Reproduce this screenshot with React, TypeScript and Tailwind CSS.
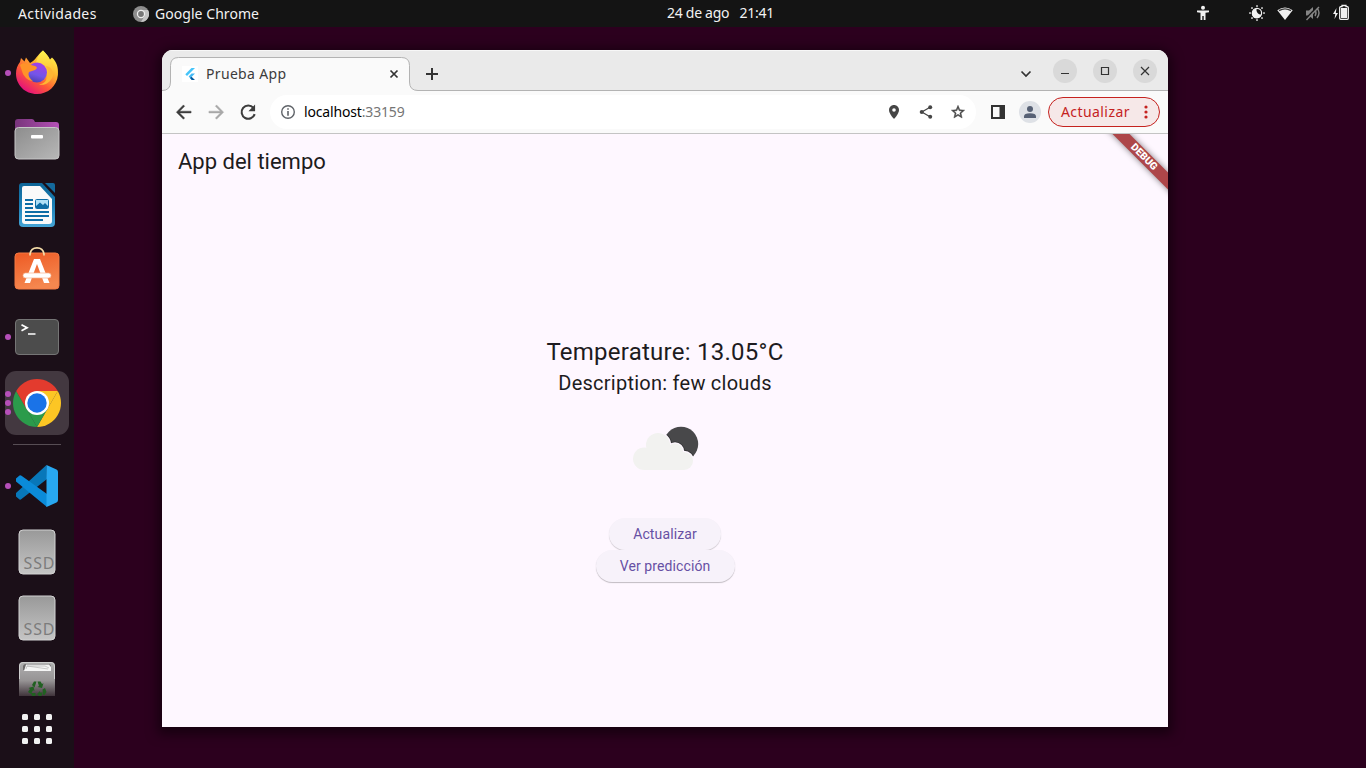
import type { ReactNode } from "react";

const UI = "font-['Noto_Sans','Open_Sans',sans-serif]";
const PAGE = "font-[Roboto,'Liberation_Sans',sans-serif]";

function Cell({ dots = 0, active = false, children }: { dots?: number; active?: boolean; children: ReactNode }) {
  const ys = dots === 3 ? [24, 33, 42] : dots === 1 ? [33] : [];
  return (
    <svg className="block h-[66px] w-[74px] shrink-0" viewBox="0 0 74 66">
      {active && <rect x="5" y="1" width="64" height="64" rx="11" fill="#433840" />}
      {children}
      {ys.map((y) => (
        <circle key={y} cx="8" cy={y} r="3" fill="#b64fb9" />
      ))}
    </svg>
  );
}

function Firefox() {
  return (
    <Cell dots={1}>
      <defs>
        <linearGradient id="ff1" x1="0.85" y1="0.1" x2="0.25" y2="0.95">
          <stop offset="0" stopColor="#fff04a" />
          <stop offset="0.35" stopColor="#ffb02e" />
          <stop offset="0.65" stopColor="#ff5a36" />
          <stop offset="1" stopColor="#e5127b" />
        </linearGradient>
        <linearGradient id="ff2" x1="0.6" y1="0" x2="0.3" y2="1">
          <stop offset="0" stopColor="#a43ee8" />
          <stop offset="0.6" stopColor="#7355e8" />
          <stop offset="1" stopColor="#4b3fb0" />
        </linearGradient>
        <linearGradient id="ff3" x1="0" y1="0" x2="0" y2="1">
          <stop offset="0" stopColor="#fff44f" />
          <stop offset="1" stopColor="#ffa52c" />
        </linearGradient>
      </defs>
      <path d="M43 10.500C45 13 48 15 49.500 20L52 17.500C57 22 58.500 28 57.900 35C57 46 48 54 37 54C25 54 16 45 16 33.500C16 29 17.500 25 20 22L21 18L24.500 21.500L26 17.500L30 23C36 20 37 15 43 10.500Z" fill="url(#ff1)" />
      <path d="M43 10.500C46 14 50 17 51 23C55 30 52 40 45 43C49 35 45 27 36 23C37 18 39 14 43 10.500Z" fill="url(#ff3)" />
      <circle cx="37" cy="32.500" r="10" fill="url(#ff2)" />
      <path d="M20 25C24 21 29 25 35 26C38 27 37 29 35 30L29 32C27.500 35 30 39 33 41C28 41 23 36 22 31Z" fill="#ff9328" />
      <path d="M45 26C51 31 49 43 39 44.500C45 46 51 42 53 36C54 30 50 26 45 26Z" fill="#ffb733" />
    </Cell>
  );
}

function Files() {
  return (
    <Cell>
      <defs>
        <linearGradient id="fl" x1="0" y1="0" x2="1" y2="1">
          <stop offset="0" stopColor="#8d8d8d" />
          <stop offset="1" stopColor="#b7b7b7" />
        </linearGradient>
        <linearGradient id="fp" x1="0" y1="0" x2="1" y2="0">
          <stop offset="0" stopColor="#78347b" />
          <stop offset="1" stopColor="#b451b6" />
        </linearGradient>
      </defs>
      <path d="M15 16Q15 13 18 13H32Q34 13 35 16H56Q59 16 59 19V30H15Z" fill="url(#fp)" />
      <rect x="15" y="21.500" width="44" height="31.500" rx="3.500" fill="url(#fl)" stroke="#c7c7c7" strokeWidth="1" />
      <rect x="31" y="29" width="12" height="3.500" rx="1" fill="#fff" />
    </Cell>
  );
}

function Writer() {
  return (
    <Cell>
      <defs>
        <linearGradient id="wr" x1="0" y1="0" x2="0" y2="1">
          <stop offset="0" stopColor="#0d6597" />
          <stop offset="0.5" stopColor="#1b7fb5" />
          <stop offset="1" stopColor="#45a5d6" />
        </linearGradient>
      </defs>
      <path d="M22 11H42L55 25V51Q55 55 51 55H23Q19 55 19 51V14Q19 11 22 11Z" fill="url(#wr)" />
      <path d="M24 14H40L52 27V49Q52 52 49 52H25Q22 52 22 49V16Q22 14 24 14Z" fill="#fafafa" />
      <path d="M45 11H53Q55 11 55 13V21Z" fill="#14699c" />
      <path d="M25 28H33M25 32H33M25 36H33M25 40H49M25 44H49M25 48H43" stroke="#0d6da6" strokeWidth="2" />
      <rect x="35.500" y="27.500" width="13" height="9" rx="1" fill="#aee0f7" stroke="#0d6da6" />
      <path d="M36 36V34L40 30.500L43 33L45 31L48 34V36Z" fill="#0d6da6" />
    </Cell>
  );
}

function Software() {
  return (
    <Cell>
      <defs>
        <linearGradient id="sw" x1="0" y1="0" x2="0.3" y2="1">
          <stop offset="0" stopColor="#ee5a24" />
          <stop offset="1" stopColor="#f5874f" />
        </linearGradient>
      </defs>
      <rect x="15" y="15" width="44" height="36" rx="3.500" fill="url(#sw)" stroke="#f47a45" />
      <path d="M30 17.500V16Q31 9.800 37 9.800Q43 9.800 44 16V17.500" fill="none" stroke="#f5dca8" strokeWidth="1.700" />
      <path d="M34 21H40L49.500 45H44L37 26L30 45H24.500Z" fill="#fff" />
      <rect x="23" y="35" width="28" height="5" rx="2.500" fill="#fff" stroke="#f6b28d" strokeWidth="0.700" />
    </Cell>
  );
}

function Terminal() {
  return (
    <Cell dots={1}>
      <rect x="15.500" y="15.500" width="43" height="35" rx="3.500" fill="#4c4c4c" stroke="#757575" />
      <path d="M21.500 20.800L27 23.700L21.500 26.700" fill="none" stroke="#fff" strokeWidth="1.800" />
      <path d="M28 30H35.500" stroke="#fff" strokeWidth="1.500" />
    </Cell>
  );
}

function Chrome() {
  return (
    <Cell dots={3} active>
      <path d="M16.220 21A24 24 0 0 1 57.780 21H37Z" fill="#e33b2e" />
      <path d="M57.780 21A24 24 0 0 1 37 57L47.390 39Z" fill="#fcc624" />
      <path d="M37 57A24 24 0 0 1 16.220 21L26.610 39Z" fill="#2b9b4b" />
      <path d="M16.220 21L26.610 39L37 33V21Z" fill="#e33b2e" />
      <path d="M57.780 21H37V33L47.390 39Z" fill="#fcc624" />
      <path d="M37 57L47.390 39L37 33L26.610 39Z" fill="#2b9b4b" />
      <circle cx="37" cy="33" r="12" fill="#fff" />
      <circle cx="37" cy="33" r="9.700" fill="#1a73e8" />
    </Cell>
  );
}

function Code() {
  return (
    <Cell dots={1}>
      <path d="M46.500 12L16 40V43.500L19.500 46.500Q20.500 47 21.500 46L47 26Z" fill="#0877b9" />
      <path d="M16 25.500L19.500 22.500Q20.500 22 21.500 22.800L47 41V54L16 28.500Z" fill="#0b8bd9" />
      <path d="M46.500 12L56.500 16.500Q58 17.300 58 19V47Q58 48.700 56.500 49.500L46.500 54Z" fill="#28a8f1" />
    </Cell>
  );
}

function Ssd({ id }: { id: string }) {
  return (
    <Cell>
      <defs>
        <linearGradient id={id} x1="0" y1="0" x2="0" y2="1">
          <stop offset="0" stopColor="#999" />
          <stop offset="1" stopColor="#c5c5c5" />
        </linearGradient>
      </defs>
      <rect x="19" y="11" width="36" height="44" rx="4" fill={`url(#${id})`} stroke="#d2d2d2" />
      <text x="23.500" y="50" textLength="31" fontSize="16" fill="#7c7c7c" fontFamily="Noto Sans">SSD</text>
    </Cell>
  );
}

function Trash() {
  return (
    <svg className="block h-[45px] w-[74px] shrink-0" viewBox="0 0 74 45">
      <defs>
        <linearGradient id="tr" x1="0" y1="0" x2="0" y2="1">
          <stop offset="0" stopColor="#b0b0b0" />
          <stop offset="0.550" stopColor="#969394" />
          <stop offset="1" stopColor="#40343b" />
        </linearGradient>
      </defs>
      <path d="M19 45V15Q19 11 23 11H51Q55 11 55 15V45Z" fill="url(#tr)" />
      <path d="M19.500 28V15Q19.500 11.500 23 11.500H51Q54.500 11.500 54.500 15V28" fill="none" stroke="#cfcfcf" />
      <path d="M23 19V16Q23 13 26 13H48Q51 13 51 16V19Z" fill="#6b696a" />
      <path d="M24 20L26 13.500H49L51 16V20Z" fill="#f5f5f5" />
      <path d="M26 18L27 15H45L49 17M27 15L48 18" fill="none" stroke="#aaa" strokeWidth="0.600" />
      <g fill="#216021">
        <path d="M32 34L34 30.500H36.500L34.500 36.500Z" />
        <path d="M37.500 30.500H40.500L42 33L43.500 32.200L42 37L37.500 36L39 35Z" />
        <path d="M28.500 37L33.500 35.500L34.500 40L33 39.300L31 43L28 41L30 38Z" />
        <path d="M42.500 38.500L45 37L46.500 41L44.500 44H43Z" />
        <path d="M31 42H35.500V45H32Z" />
        <path d="M37 43L40 40V41.500H42.500L41.500 45H39Z" />
      </g>
    </svg>
  );
}

function StatusIcons() {
  return (
    <svg className="block h-[27px] w-[166px]" viewBox="1190 0 166 27" fill="#f2f2f2">
      <circle cx="1203" cy="7.800" r="2" />
      <path d="M1197 10.500H1209V12.200L1205.500 12.700V20H1203.700V16H1202.300V20H1200.500V12.700L1197 12.200Z" />
      <circle cx="1257" cy="13" r="4.600" fill="none" stroke="#f2f2f2" strokeWidth="1.200" />
      <path d="M1255 9A4.800 4.800 0 1 0 1261.300 14.500A4.600 4.600 0 0 1 1256.500 9Z" />
      <g fill="#a5a5a5">
        <rect x="1256" y="5" width="2" height="2" rx="0.600" /><rect x="1256" y="19" width="2" height="2" rx="0.600" />
        <rect x="1249" y="12" width="2" height="2" rx="0.600" /><rect x="1263" y="12" width="2" height="2" rx="0.600" />
        <rect x="1251" y="7" width="2" height="2" rx="0.600" /><rect x="1261" y="7" width="2" height="2" rx="0.600" />
        <rect x="1251" y="17" width="2" height="2" rx="0.600" /><rect x="1261" y="17" width="2" height="2" rx="0.600" />
      </g>
      <path d="M1277.300 10.200Q1285 4.800 1292.700 10.200L1285 20Z" />
      <path d="M1279 10.600Q1285 7.200 1291 10.600" fill="none" stroke="#3a3a3a" strokeWidth="1.300" />
      <g stroke="#858585" fill="none" strokeWidth="1.400">
        <path d="M1306 10.500H1309L1313 7V19L1309 15.500H1306Z" fill="#858585" stroke="none" />
        <path d="M1315 10Q1317 13 1315 16M1317 8Q1321 13 1317 18" />
        <path d="M1305.500 19L1317.500 6.500" stroke="#141414" strokeWidth="1.500" />
        <path d="M1306.500 20L1319 7" />
      </g>
      <path d="M1336.500 8L1333 14H1335.300L1334.500 19L1338 13H1335.800Z" />
      <path d="M1339.700 7.700Q1339.700 6.700 1340.700 6.700H1342V5.500H1346V6.700H1347.300Q1348.300 6.700 1348.300 7.700V18.300Q1348.300 19.300 1347.300 19.300H1340.700Q1339.700 19.300 1339.700 18.300Z" fill="none" stroke="#f2f2f2" strokeWidth="1.300" />
      <rect x="1341" y="8" width="6" height="10" />
    </svg>
  );
}

function TopBar() {
  return (
    <header className={`${UI} grid h-[27px] shrink-0 grid-cols-[1fr_auto_1fr] items-center bg-[#141414] text-[14px] leading-[27px] text-[#f2f2f2]`}>
      <div className="flex items-center pl-[18px]">
        <span className="w-[115px] tracking-[0.360px]">Actividades</span>
        <svg className="mr-[6px] size-4" viewBox="0 0 16 16">
          <circle cx="8" cy="8" r="8" fill="#8d8d8d" />
          <path d="M8 4H15A8 8 0 0 1 8 16L12 9Z" fill="#c4c4c4" />
          <circle cx="8" cy="8" r="4.200" fill="#eee" />
          <circle cx="8" cy="8" r="2.900" fill="#777" />
        </svg>
        <span className="tracking-[0.050px]">Google Chrome</span>
      </div>
      <div className="flex w-[107px] translate-x-[37.500px] justify-between whitespace-nowrap pb-px text-[14px] leading-[26px] tracking-[-0.280px]">
        <span>24 de ago</span>
        <span>21:41</span>
      </div>
      <div className="flex justify-end pr-[10px]"><StatusIcons /></div>
    </header>
  );
}

function Dock() {
  return (
    <aside className="flex w-[74px] shrink-0 flex-col bg-[#1b0f18] pt-[13px]">
      <Firefox />
      <Files />
      <Writer />
      <Software />
      <Terminal />
      <Chrome />
      <div className="flex h-[17px] shrink-0 justify-center pt-[8px]"><div className="h-px w-[48px] bg-[#574d54]" /></div>
      <Code />
      <Ssd id="ssd1" />
      <Ssd id="ssd2" />
      <Trash />
      <div className="mx-auto mt-[18px] grid grid-cols-3 gap-[6px]">
        {Array.from({ length: 9 }, (_, i) => <i key={i} className="size-[6px] rounded-[1.500px] bg-[#f2f2f2]" />)}
      </div>
    </aside>
  );
}

function TabStrip() {
  return (
    <div className="relative flex h-[41px] shrink-0 items-start border-b border-[#b3b3b3] bg-[#eaeaea] shadow-[inset_0_1px_0_#f7f7f7]">
      <svg className="absolute left-0 top-0 h-[41px] w-[256px]" viewBox="0 0 256 41">
        <path d="M0 40.500Q8.500 40.500 8.500 32V15.500Q8.500 7.500 16.500 7.500H239.500Q247.500 7.500 247.500 15.500V32Q247.500 40.500 256 40.500V41.500H0Z" fill="#fafafa" />
        <path d="M0 40.500Q8.500 40.500 8.500 32V15.500Q8.500 7.500 16.500 7.500H239.500Q247.500 7.500 247.500 15.500V32Q247.500 40.500 256 40.500" fill="none" stroke="#b3b3b3" />
      </svg>
      <div className="relative mt-[8px] flex h-[32px] w-[240px] items-center pl-[20px]">
        <svg className="size-4 bg-white" viewBox="0 0 16 16">
          <path d="M9.500 2H13L5 10L3.300 8.200Z" fill="#45c4f9" />
          <path d="M9.500 7.600H13L9.300 11.300L11.500 13.500H9.500L6.600 10.500Z" fill="#45b9f5" />
          <path d="M8 12L9.500 10.800L13 14H9.700Z" fill="#075b9d" />
        </svg>
        <span className={`${UI} ml-[8px] w-[183px] pb-[2px] text-[14px] tracking-[0.330px] text-[#3c3c3c]`}>Prueba App</span>
        <svg className="size-[10px]" viewBox="0 0 10 10"><path d="M1.500 1.500L8.500 8.500M8.500 1.500L1.500 8.500" stroke="#333" strokeWidth="1.700" /></svg>
      </div>
      <svg className="ml-[24px] mt-[18px] size-[12px]" viewBox="0 0 12 12"><path d="M6 0V12M0 6H12" stroke="#333" strokeWidth="2" /></svg>
      <svg className="ml-auto mr-[21px] mt-[18px] size-[12px]" viewBox="0 0 12 12"><path d="M1.500 3.500L6 8L10.500 3.500" fill="none" stroke="#333" strokeWidth="1.700" /></svg>
      <div className="mr-[11px] mt-[9px] flex gap-[16px]">
        {["M8 14.500H16", "M8.500 8.500H15.500V15.500H8.500Z", "M8 8L16 16M16 8L8 16"].map((d) => (
          <svg key={d} className="size-[24px] rounded-full bg-[#d9d9d9]" viewBox="0 0 24 24"><path d={d} fill="none" stroke="#333" strokeWidth="1.200" /></svg>
        ))}
      </div>
    </div>
  );
}

function Toolbar() {
  return (
    <div className="flex h-[43px] shrink-0 items-center border-b border-[#c4c4c4] bg-[#fafafa] pl-[12px] pr-[8px]">
      <div className="flex gap-[12px]">
        <svg className="size-5" viewBox="0 0 24 24" fill="#3c3c3c" stroke="#3c3c3c" strokeWidth="0.500"><path d="M20.500 11H6.800l6-6L11.300 3.500 2.800 12.200l8.500 8.500 1.500-1.500-6-6H20.500z" /></svg>
        <svg className="size-5" viewBox="0 0 24 24" fill="#a8a8a8" stroke="#a8a8a8" strokeWidth="0.500"><path d="M3.500 11h13.700l-6-6 1.500-1.500 8.500 8.700-8.500 8.500-1.500-1.500 6-6H3.500z" /></svg>
        <svg className="size-5" viewBox="0 0 24 24" fill="none" stroke="#3c3c3c" strokeWidth="2.500"><path d="M18.500 7A8 8 0 1 0 20 14.500" /><path d="M20.500 3V11H12.500Z" fill="#3c3c3c" stroke="none" /></svg>
      </div>
      <div className="ml-[12px] flex h-[34px] w-[706px] items-center rounded-full bg-white pl-[10px] pr-[10px]">
        <svg className="size-4" viewBox="0 0 16 16"><circle cx="8" cy="8" r="6.300" fill="none" stroke="#5f6368" strokeWidth="1.400" /><path d="M8 4.300V5.800M8 7V11.700" stroke="#5f6368" strokeWidth="1.600" /></svg>
        <span className={`${UI} ml-[8px] pb-[2px] text-[14px] tracking-[-0.160px] text-[#757575]`}><span className="text-black">localhost</span>:33159</span>
        <div className="ml-auto flex gap-[16px]">
          <svg className="size-4" viewBox="0 0 16 16"><path d="M8 1C5.200 1 3 3.200 3 6C3 9.700 8 15 8 15S13 9.700 13 6C13 3.200 10.800 1 8 1Z" fill="#464646" /><circle cx="8" cy="6" r="1.800" fill="#fff" /></svg>
          <svg className="size-4" viewBox="0 0 16 16" fill="#464646"><path d="M3.800 8L12 3.200M3.800 8L12 12.800" stroke="#464646" strokeWidth="1.300" /><circle cx="3.800" cy="8" r="2.100" /><circle cx="12.200" cy="3.200" r="2" /><circle cx="12.200" cy="12.800" r="2" /></svg>
          <svg className="size-4" viewBox="0 0 24 24" fill="#464646"><path d="M22 9.240l-7.190-.62L12 2 9.190 8.630 2 9.240l5.460 4.730L5.820 21 12 17.270 18.180 21l-1.630-7.030L22 9.240zM12 15.400l-3.760 2.270 1-4.280-3.320-2.880 4.380-.38L12 6.100l1.710 4.040 4.380.38-3.320 2.880 1 4.280L12 15.400z" stroke="#464646" strokeWidth="0.700" /></svg>
        </div>
      </div>
      <svg className="ml-[14px] size-4" viewBox="0 0 16 16"><path d="M1 1H15V15H1ZM3 3V13H9.500V3Z" fill="#333" fillRule="evenodd" /></svg>
      <svg className="ml-[13px] size-[22px]" viewBox="0 0 22 22"><circle cx="11" cy="11" r="11" fill="#dee1e6" /><g fill="#566074"><circle cx="11" cy="8" r="3" /><path d="M5 17V15.500Q5 12.300 11 12.300T17 15.500V17Z" /></g></svg>
      <div className="ml-[7px] flex h-[30px] w-[112px] items-center rounded-full border border-[#c5221f] bg-[#f6e8e8] pl-[12px] pr-[11px]">
        <span className={`${UI} pb-[2px] text-[14px] tracking-[0.420px] text-[#c5221f]`}>Actualizar</span>
        <svg className="ml-auto h-[14px] w-[4px]" viewBox="0 0 4 14" fill="#c5221f"><circle cx="2" cy="2" r="1.600" /><circle cx="2" cy="7" r="1.600" /><circle cx="2" cy="12" r="1.600" /></svg>
      </div>
    </div>
  );
}

function CloudShape() {
  return (
    <>
      <circle cx="658" cy="445" r="12" />
      <circle cx="644.300" cy="458.700" r="11.300" />
      <circle cx="675" cy="451.500" r="8" />
      <circle cx="684" cy="461" r="9" />
      <path d="M644 470V452L658 442L675 450L684 458V470Z" />
    </>
  );
}

function WeatherIcon() {
  return (
    <svg className="mt-[26px] h-[48px] w-[70px]" viewBox="630 424 70 48">
      <clipPath id="moon"><circle cx="681" cy="444" r="17.200" /></clipPath>
      <circle cx="681" cy="444" r="17.200" fill="#48484a" />
      <g fill="#333335" stroke="#333335" strokeWidth="4" clipPath="url(#moon)"><CloudShape /></g>
      <g fill="#fef7ff" stroke="#fef7ff" strokeWidth="2.400"><CloudShape /></g>
      <g fill="#f2f2f0"><CloudShape /></g>
    </svg>
  );
}

function WeatherPage() {
  return (
    <main className={`${PAGE} relative flex grow flex-col overflow-hidden bg-[#fef7ff] text-[#1d1b20]`}>
      <h1 className="h-[56px] pl-[16px] text-[22px] leading-[55px]">App del tiempo</h1>
      <div className="flex flex-col items-center pt-[146px]">
        <p className="text-[24px] leading-[32px] tracking-[0.250px]">Temperature: 13.05°C</p>
        <p className="text-[20px] leading-[30px] tracking-[0.250px]">Description: few clouds</p>
        <WeatherIcon />
        <button className="mt-[46px] h-[32px] w-[112px] rounded-full bg-[#f7f2fa] text-[14px] tracking-[0.120px] text-[#6750a4] shadow-[0_1px_1px_#0000002e]">Actualizar</button>
        <button className="z-10 h-[32px] w-[139px] rounded-full bg-[#f7f2fa] text-[14px] tracking-[0.100px] text-[#6750a4] shadow-[0_1px_1px_#0000003d]">Ver predicción</button>
      </div>
      <div className="absolute right-[-38px] top-[17px] flex h-[12px] w-[124px] rotate-45 items-center justify-center bg-[#ad4649] text-[10.200px] font-black leading-none text-white shadow-[0_0_6px_#0000007f]">DEBUG</div>
    </main>
  );
}

export default function App() {
  return (
    <div className="flex h-[768px] w-[1366px] flex-col overflow-hidden bg-[#2c001e]">
      <TopBar />
      <div className="flex min-h-0 grow">
        <Dock />
        <div className="ml-[88px] mt-[23px] flex h-[677px] w-[1006px] flex-col overflow-hidden rounded-t-[11px] bg-[#fafafa] shadow-[0_3px_12px_4px_#00000080]">
          <TabStrip />
          <Toolbar />
          <WeatherPage />
        </div>
      </div>
    </div>
  );
}
